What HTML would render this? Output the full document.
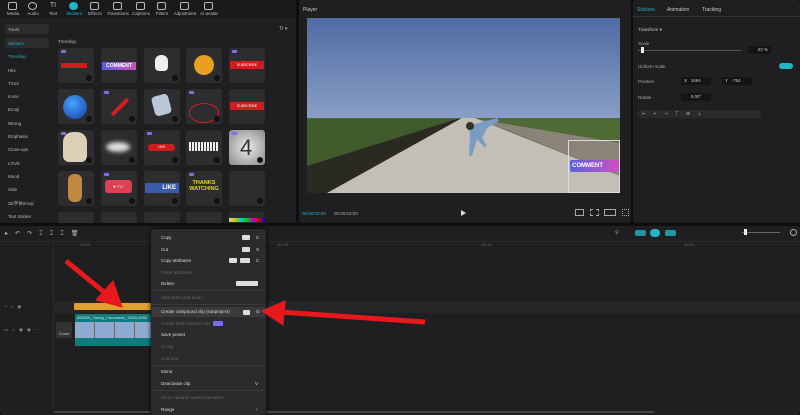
<!DOCTYPE html>
<html><head><meta charset="utf-8"><style>
*{margin:0;padding:0;box-sizing:border-box}
body{width:800px;height:415px;background:#0e0e0e;font-family:"Liberation Sans",sans-serif;color:#ccc;position:relative;overflow:hidden;font-size:5px}
.a{position:absolute}
.panel{position:absolute;background:#1f1f21;border-radius:3px}
.tab{position:absolute;top:11px;font-size:4.5px;color:#bbb;text-align:center}
.ico{position:absolute;top:2px;width:9px;height:8px;border:1px solid #bbb;border-radius:2px}
.side{position:absolute;left:8px;font-size:4.5px;color:#bbb}
.cell{position:absolute;width:36px;height:35px;background:#2d2d2f;border-radius:3px}
.dl{position:absolute;right:2px;bottom:2px;width:6px;height:6px;border-radius:50%;background:#111}
.pro{position:absolute;left:3px;top:2px;width:5px;height:3px;background:#8a6cf0;border-radius:1px}
.mi{position:absolute;left:10px;font-size:4.5px;color:#ddd}
.mi.d{color:#666}
.kb{position:absolute;height:5px;background:#ddd;border-radius:1px}
</style></head><body>
<div class="panel" style="left:0;top:0;width:296px;height:223px"></div>
<div class="a" style="left:0;top:0;width:296px;height:18px;background:#1a1a1c"></div>
<div class="ico" style="left:8px"></div><div class="tab" style="left:3px;width:20px">Media</div>
<div class="ico" style="left:28px;border-radius:50%"></div><div class="tab" style="left:23px;width:20px">Audio</div>
<div class="tab" style="left:46px;width:14px;top:2px;font-size:7px">TI</div><div class="tab" style="left:43px;width:20px">Text</div>
<div class="ico" style="left:69px;border-color:#1fb5c4;background:#1fb5c4;border-radius:50%"></div><div class="tab" style="left:63px;width:22px;color:#1fb5c4">Stickers</div>
<div class="ico" style="left:90px"></div><div class="tab" style="left:84px;width:22px">Effects</div>
<div class="ico" style="left:113px"></div><div class="tab" style="left:104px;width:28px">Transitions</div>
<div class="ico" style="left:136px"></div><div class="tab" style="left:129px;width:24px">Captions</div>
<div class="ico" style="left:157px"></div><div class="tab" style="left:151px;width:22px">Filters</div>
<div class="ico" style="left:180px"></div><div class="tab" style="left:171px;width:28px">Adjustment</div>
<div class="ico" style="left:204px"></div><div class="tab" style="left:197px;width:24px">AI avatar</div>
<div class="a" style="left:5px;top:24px;width:44px;height:10px;background:#2c2c2e;border-radius:2px"></div>
<div class="side" style="top:27px">Yours</div>
<div class="a" style="left:5px;top:38px;width:44px;height:10px;background:#2c2c2e;border-radius:2px"></div>
<div class="side" style="top:41px;color:#1fb5c4">Stickers</div>
<div class="side" style="top:54px;color:#1fb5c4">Trending</div>
<div class="side" style="top:68px">Hits</div>
<div class="side" style="top:81px">TS12</div>
<div class="side" style="top:94px">Icons</div>
<div class="side" style="top:107px">Emoji</div>
<div class="side" style="top:121px">Wrong</div>
<div class="side" style="top:134px">Emphasis</div>
<div class="side" style="top:147px">Close-ups</div>
<div class="side" style="top:161px">LOVE</div>
<div class="side" style="top:174px">Mood</div>
<div class="side" style="top:187px">Sale</div>
<div class="side" style="top:201px">3D字体emoji</div>
<div class="side" style="top:214px">Text Sticker</div>
<div class="a" style="left:58px;top:39px;font-size:4.5px;color:#bbb">Trending</div>
<div class="a" style="left:279px;top:26px;font-size:5px;color:#bbb">Tr ▾</div>
<div class="cell" style="left:58px;top:48px"><div class="pro"></div><div class="a" style="left:3px;top:15px;width:26px;height:5px;background:#d01c1c"></div><div class="dl"></div></div>
<div class="cell" style="left:101px;top:48px"><div class="a" style="left:1px;top:14px;width:34px;height:8px;background:linear-gradient(90deg,#5860e0,#d050c0);font-size:5px;color:#fff;font-weight:bold;text-align:center;line-height:8px">COMMENT</div></div>
<div class="cell" style="left:144px;top:48px"><div class="a" style="left:11px;top:7px;width:13px;height:16px;background:#eee;border-radius:6px 6px 4px 4px"></div><div class="dl"></div></div>
<div class="cell" style="left:186px;top:48px"><div class="a" style="left:8px;top:7px;width:20px;height:20px;background:#e8a020;border-radius:50%"></div><div class="dl"></div></div>
<div class="cell" style="left:229px;top:48px"><div class="pro"></div><div class="a" style="left:1px;top:13px;width:34px;height:8px;background:#d01c1c;font-size:3.5px;color:#fff;text-align:center;line-height:8px">SUBSCRIBE</div></div>
<div class="cell" style="left:58px;top:89px"><div class="a" style="left:5px;top:6px;width:24px;height:24px;background:radial-gradient(circle at 40% 35%,#4aa0ff,#1040a0);border-radius:50%"></div><div class="dl"></div></div>
<div class="cell" style="left:101px;top:89px"><div class="pro"></div><div class="a" style="left:8px;top:16px;width:22px;height:4px;background:#d02020;transform:rotate(-45deg)"></div><div class="dl"></div></div>
<div class="cell" style="left:144px;top:89px"><div class="a" style="left:9px;top:6px;width:17px;height:20px;background:#b8c8d8;border-radius:4px;transform:rotate(-15deg)"></div><div class="dl"></div></div>
<div class="cell" style="left:186px;top:89px"><div class="pro"></div><div class="a" style="left:3px;top:14px;width:30px;height:20px;border:1.5px solid #d02020;border-radius:50%"></div><div class="dl"></div></div>
<div class="cell" style="left:229px;top:89px"><div class="a" style="left:1px;top:13px;width:34px;height:8px;background:#d01c1c;font-size:3.5px;color:#fff;text-align:center;line-height:8px">SUBSCRIBE</div></div>
<div class="cell" style="left:58px;top:130px"><div class="pro"></div><div class="a" style="left:5px;top:2px;width:24px;height:30px;background:#ddd0b8;border-radius:10px 10px 6px 6px"></div><div class="dl"></div></div>
<div class="cell" style="left:101px;top:130px"><div class="a" style="left:5px;top:12px;width:24px;height:10px;background:#ddd;border-radius:50%;filter:blur(2px)"></div><div class="dl"></div></div>
<div class="cell" style="left:144px;top:130px"><div class="pro"></div><div class="a" style="left:4px;top:14px;width:27px;height:7px;background:#d01c1c;border-radius:4px;font-size:3.5px;color:#fff;text-align:center;line-height:7px">LIKE</div><div class="dl"></div></div>
<div class="cell" style="left:186px;top:130px"><div class="a" style="left:3px;top:12px;width:30px;height:9px;background:repeating-linear-gradient(90deg,#eee 0 2px,#333 2px 3px)"></div><div class="dl"></div></div>
<div class="cell" style="left:229px;top:130px;background:radial-gradient(#eee,#888)"><div class="pro"></div><div class="a" style="left:11px;top:5px;font-size:22px;color:#333">4</div><div class="dl"></div></div>
<div class="cell" style="left:58px;top:171px"><div class="a" style="left:10px;top:3px;width:14px;height:28px;background:#c08840;border-radius:6px"></div><div class="dl"></div></div>
<div class="cell" style="left:101px;top:171px"><div class="pro"></div><div class="a" style="left:4px;top:9px;width:27px;height:13px;background:#e04050;border-radius:3px;font-size:4px;color:#fff;text-align:center;line-height:13px">♥ 717</div><div class="dl"></div></div>
<div class="cell" style="left:144px;top:171px"><div class="a" style="left:1px;top:12px;width:34px;height:10px;background:#3a5ca8;font-size:6px;font-weight:bold;color:#fff;text-align:right;padding-right:3px;line-height:10px">LIKE</div><div class="dl"></div></div>
<div class="cell" style="left:186px;top:171px"><div class="pro"></div><div class="a" style="left:2px;top:9px;width:32px;font-size:5.5px;font-weight:bold;color:#e8d820;text-align:center;line-height:6px">THANKS<br>WATCHING</div><div class="dl"></div></div>
<div class="cell" style="left:229px;top:171px"><div class="dl"></div></div>
<div class="cell" style="left:58px;top:212px;height:11px"></div><div class="cell" style="left:101px;top:212px;height:11px"></div><div class="cell" style="left:144px;top:212px;height:11px"></div><div class="cell" style="left:186px;top:212px;height:11px"></div>
<div class="cell" style="left:229px;top:212px;height:11px"><div class="a" style="left:0;top:6px;width:36px;height:4px;background:linear-gradient(90deg,#ccc,#cc0,#0cc,#0c0,#c0c,#c00,#00c)"></div></div>
<!-- player -->
<div class="panel" style="left:299px;top:0;width:332px;height:223px"></div>
<div class="a" style="left:303px;top:7px;font-size:5px;color:#ccc">Player</div>
<svg class="a" style="left:307px;top:18px" width="313" height="175" viewBox="0 0 313 175">
<defs><linearGradient id="sky" x1="0" y1="0" x2="0" y2="1"><stop offset="0" stop-color="#4f6ba3"/><stop offset="1" stop-color="#8a9fc6"/></linearGradient></defs>
<rect width="313" height="101" fill="url(#sky)"/>
<rect y="100" width="313" height="75" fill="#4f6a34"/>
<polygon points="0,101 150,101 0,150" fill="#415c2c"/>
<polygon points="0,148 150,101 155,101 20,175 0,175" fill="#2a2a22"/>
<polygon points="155,100 168,100 313,158 313,175 20,175" fill="#c4bfb6"/>
<polygon points="170,101 313,125 313,158 200,112" fill="#8a8478"/>
<path d="M162,108 L175,104 L190,100 L192,103 L180,110 L175,120 L180,128 L177,129 L170,121 L165,138 L162,138 L163,120 Z" fill="#7a9cc4"/>
<circle cx="163" cy="108" r="4" fill="#332"/>
</svg>
<div class="a" style="left:568px;top:140px;width:52px;height:53px;border:1px solid #ddd"></div>
<div class="a" style="left:570px;top:160px;width:49px;height:12px;background:linear-gradient(90deg,#5a60e0,#d050c0);border-radius:2px;font-size:6px;font-weight:bold;color:#fff;line-height:12px;padding-left:2px">COMMENT</div>
<div class="a" style="left:302px;top:211px;font-size:4.5px;color:#1fb5c4">00:00:03:00</div>
<div class="a" style="left:334px;top:211px;font-size:4.5px;color:#aaa">00:00:03:00</div>
<div class="a" style="left:461px;top:210px;width:0;height:0;border-left:5px solid #ddd;border-top:3px solid transparent;border-bottom:3px solid transparent"></div>
<div class="a" style="left:575px;top:209px;width:9px;height:7px;border:1px solid #aaa"></div>
<div class="a" style="left:590px;top:209px;width:9px;height:7px;border:1px dashed #aaa"></div>
<div class="a" style="left:604px;top:209px;width:12px;height:7px;border:1px solid #aaa"></div>
<div class="a" style="left:622px;top:209px;width:7px;height:7px;border:1px dotted #aaa"></div>
<!-- right panel -->
<div class="panel" style="left:633px;top:0;width:167px;height:223px"></div>
<div class="a" style="left:633px;top:16px;width:167px;height:1px;background:#333"></div>
<div class="a" style="left:637px;top:7px;font-size:5px;color:#1fb5c4">Stickers</div>
<div class="a" style="left:667px;top:7px;font-size:5px;color:#ccc">Animation</div>
<div class="a" style="left:702px;top:7px;font-size:5px;color:#ccc">Tracking</div>
<div class="a" style="left:638px;top:27px;font-size:4.5px;color:#ccc">Transform ▾</div>
<div class="a" style="left:638px;top:41px;font-size:4.5px;color:#aaa">Scale</div>
<div class="a" style="left:638px;top:50px;width:103px;height:1px;background:#555"></div>
<div class="a" style="left:641px;top:47px;width:3px;height:6px;background:#eee"></div>
<div class="a" style="left:748px;top:46px;width:23px;height:8px;background:#151515;font-size:4.5px;text-align:right;padding-right:3px;line-height:8px">23 %</div>
<div class="a" style="left:638px;top:64px;font-size:4.5px;color:#aaa">Uniform scale</div>
<div class="a" style="left:779px;top:63px;width:14px;height:6px;background:#1fb5c4;border-radius:3px"></div>
<div class="a" style="left:638px;top:79px;font-size:4.5px;color:#aaa">Position</div>
<div class="a" style="left:681px;top:77px;width:30px;height:8px;background:#151515;font-size:4.5px;line-height:8px;padding-left:3px">X &nbsp;&nbsp;1694</div>
<div class="a" style="left:722px;top:77px;width:30px;height:8px;background:#151515;font-size:4.5px;line-height:8px;padding-left:3px">Y &nbsp;&nbsp;-754</div>
<div class="a" style="left:638px;top:95px;font-size:4.5px;color:#aaa">Rotate</div>
<div class="a" style="left:681px;top:93px;width:30px;height:8px;background:#151515;font-size:4.5px;line-height:8px;text-align:center">0.00°</div>
<div class="a" style="left:638px;top:110px;width:123px;height:8px;background:#2a2a2c;border-radius:2px;font-size:5px;color:#aaa;line-height:8px;letter-spacing:7px;padding-left:4px">⊢+⊣⊤⊕⊥</div>
<!-- timeline -->
<div class="panel" style="left:0;top:226px;width:800px;height:189px"></div>
<div class="a" style="left:0;top:241px;width:800px;height:1px;background:#2a2a2a"></div>
<div class="a" style="left:53px;top:241px;width:1px;height:174px;background:#2a2a2a"></div>
<div class="a" style="left:5px;top:230px;font-size:6px;color:#bbb;letter-spacing:7px">▸↶↷⌶⌶⌶🗑</div>
<div class="a" style="left:80px;top:242px;font-size:4px;color:#666">00:00</div>
<div class="a" style="left:278px;top:242px;font-size:4px;color:#666">00:05</div>
<div class="a" style="left:482px;top:242px;font-size:4px;color:#666">00:10</div>
<div class="a" style="left:684px;top:242px;font-size:4px;color:#666">00:15</div>
<div class="a" style="left:615px;top:230px;font-size:5px;color:#aaa">⚲</div>
<div class="a" style="left:635px;top:230px;width:11px;height:6px;background:#1fb5c4;border-radius:2px;opacity:.8"></div>
<div class="a" style="left:650px;top:229px;width:10px;height:8px;background:#1fb5c4;border-radius:4px"></div>
<div class="a" style="left:665px;top:230px;width:11px;height:6px;background:#1fb5c4;border-radius:2px;opacity:.8"></div>
<div class="a" style="left:742px;top:232px;width:38px;height:1px;background:#666"></div>
<div class="a" style="left:744px;top:229px;width:3px;height:6px;background:#eee"></div>
<div class="a" style="left:790px;top:229px;width:7px;height:7px;border:1px solid #aaa;border-radius:50%"></div>
<div class="a" style="left:54px;top:301px;width:746px;height:12px;background:#262628"></div>
<div class="a" style="left:4px;top:304px;font-size:4.5px;color:#999;letter-spacing:4px">◔⌂◉</div>
<div class="a" style="left:4px;top:327px;font-size:4.5px;color:#999;letter-spacing:4px">▭⌂◉◉⋯</div>
<div class="a" style="left:56px;top:322px;width:16px;height:16px;background:#333;border-radius:2px;font-size:4px;text-align:center;padding-top:9px">Cover</div>
<div class="a" style="left:74px;top:303px;width:80px;height:7px;background:#e0a030;border-radius:1px"></div>
<div class="a" style="left:75px;top:314px;width:80px;height:32px;background:#0f7c7c;border-radius:1px"></div>
<div class="a" style="left:77px;top:315px;font-size:4px;color:#ddd">853095_Young_Caucasian_1920x1080</div>
<div class="a" style="left:75px;top:322px;width:80px;height:16px;background:repeating-linear-gradient(90deg,#8eaad0 0 19px,#667 19px 20px)"></div>
<div class="a" style="left:54px;top:411px;width:600px;height:2px;background:#444;border-radius:1px"></div>
<div class="a" style="left:151px;top:229px;width:115px;height:186px;background:#2b2b2d;border-radius:3px;box-shadow:0 0 4px #000"></div>
<div class="mi" style="left:161px;top:235px">Copy</div><div class="kb" style="left:242px;top:235px;width:8px"></div><div class="mi" style="left:256px;top:235px">C</div>
<div class="mi" style="left:161px;top:247px">Cut</div><div class="kb" style="left:242px;top:247px;width:8px"></div><div class="mi" style="left:256px;top:247px">X</div>
<div class="mi" style="left:161px;top:258px">Copy attributes</div><div class="kb" style="left:229px;top:258px;width:8px"></div><div class="kb" style="left:240px;top:258px;width:10px"></div><div class="mi" style="left:256px;top:258px">C</div>
<div class="mi d" style="left:161px;top:270px">Paste attributes</div>
<div class="mi" style="left:161px;top:281px">Delete</div><div class="kb" style="left:236px;top:281px;width:22px"></div>
<div class="a" style="left:152px;top:290px;width:113px;height:1px;background:#3a3a3a"></div>
<div class="mi d" style="left:161px;top:295px">Split video and audio</div>
<div class="a" style="left:152px;top:304px;width:113px;height:1px;background:#3a3a3a"></div>
<div class="a" style="left:152px;top:307px;width:113px;height:10px;background:#3a3a3c"></div>
<div class="mi" style="left:161px;top:309px">Create compound clip (subproject)</div><div class="kb" style="left:243px;top:310px;width:7px"></div><div class="mi" style="left:256px;top:309px">G</div>
<div class="mi d" style="left:161px;top:321px">Create multi-camera clip</div><div class="a" style="left:213px;top:321px;width:10px;height:5px;background:#7a6cf0;border-radius:1px"></div>
<div class="mi" style="left:161px;top:332px">Save preset</div>
<div class="mi d" style="left:161px;top:344px">Group</div>
<div class="mi d" style="left:161px;top:356px">Ungroup</div>
<div class="a" style="left:152px;top:365px;width:113px;height:1px;background:#3a3a3a"></div>
<div class="mi" style="left:161px;top:369px">Mirror</div>
<div class="mi" style="left:161px;top:381px">Deactivate clip</div><div class="mi" style="left:255px;top:381px">V</div>
<div class="a" style="left:152px;top:390px;width:113px;height:1px;background:#3a3a3a"></div>
<div class="mi d" style="left:161px;top:395px">Show variable speed animation</div>
<div class="mi" style="left:161px;top:407px">Range</div><div class="mi" style="left:256px;top:407px">›</div>
<svg class="a" style="left:0;top:0" width="800" height="415">
<g fill="#e8191c" stroke="#e8191c">
<line x1="66" y1="261" x2="104" y2="292" stroke-width="5"/>
<polygon points="96,300 122,307 113,281" stroke-width="1"/>
<line x1="280" y1="312" x2="425" y2="322" stroke-width="5"/>
<polygon points="262,311 285,301 283,325" stroke-width="1"/>
</g></svg>
</body></html>
